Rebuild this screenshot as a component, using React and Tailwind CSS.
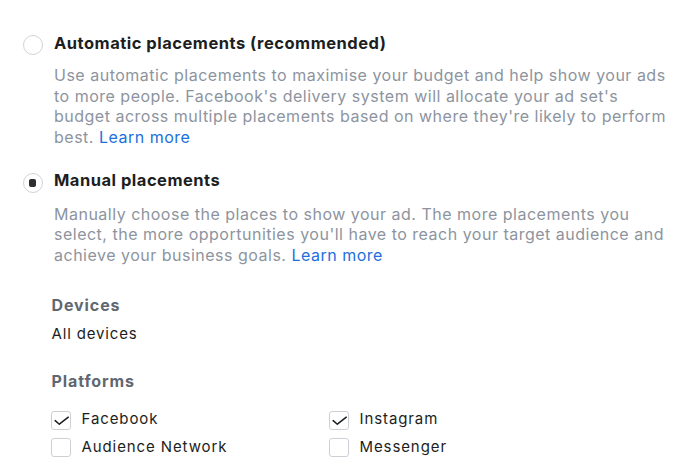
import React from "react";

function Radio({ checked }) {
  return (
    <div className="w-[20px] h-[20px] mt-[2.5px] rounded-full border border-[#d0d3d8] bg-white flex items-center justify-center shrink-0">
      {checked && <div className="w-[7px] h-[8px] rounded-[2px] bg-[#2d2f33]" />}
    </div>
  );
}

function Check({ checked, label }) {
  return (
    <div className="flex items-center h-[27.5px]">
      <div className="w-[20px] h-[19px] mt-[2px] rounded-[3px] border border-[#ccd0d5] bg-white shrink-0 relative">
        {checked && (
          <svg className="absolute left-0 top-0" width="20" height="19" viewBox="0 0 20 19" fill="none">
            <path d="M3.2 8.6 L7.3 12.2 L16.3 5.2" stroke="#1c1e21" strokeWidth="1.5" strokeLinecap="round" strokeLinejoin="round" />
          </svg>
        )}
      </div>
      <span className="ml-[11px] text-[15px] leading-[20px] tracking-[0.9px] text-[#1c1e21]">{label}</span>
    </div>
  );
}

export default function App() {
  return (
    <div className="w-[700px] h-[469px] bg-white overflow-hidden font-['Inter',sans-serif]">
      <div className="pl-[22.5px] pt-[32.5px]">
        <div className="flex items-start gap-[11.5px]">
          <Radio />
          <div className="text-[16.5px] leading-[20px] font-bold tracking-[0.5px] text-[#1c1e21]">Automatic placements (recommended)</div>
        </div>
        <p className="ml-[31.5px] mt-[10px] w-[618px] text-[16px] leading-[20.7px] tracking-[0.5px] text-[#8d949e]">
          Use automatic placements to maximise your budget and help show your ads to more people. Facebook's delivery system will allocate your ad set's budget across multiple placements based on where they're likely to perform best. <span className="text-[#216fdb]">Learn more</span>
        </p>
        <div className="flex items-start gap-[11.5px] mt-[22.5px]">
          <Radio checked />
          <div className="text-[16.5px] leading-[20px] font-bold tracking-[0.5px] text-[#1c1e21]">Manual placements</div>
        </div>
        <p className="ml-[31.5px] mt-[11px] w-[618px] text-[16px] leading-[20.5px] tracking-[0.5px] text-[#8d949e]">
          Manually choose the places to show your ad. The more placements you select, the more opportunities you'll have to reach your target audience and achieve your business goals. <span className="text-[#216fdb]">Learn more</span>
        </p>
        <div className="ml-[29px] mt-[29.5px]">
          <div className="text-[16px] leading-[20px] font-bold tracking-[0.9px] text-[#606770]">Devices</div>
          <div className="mt-[9.2px] text-[15px] leading-[20px] tracking-[0.85px] text-[#1c1e21]">All devices</div>
          <div className="mt-[26.5px] text-[16px] leading-[20px] font-bold tracking-[0.9px] text-[#606770]">Platforms</div>
          <div className="mt-[15px] ml-[-1px] grid grid-cols-[278px_1fr]">
            <Check checked label="Facebook" />
            <Check checked label="Instagram" />
            <Check label="Audience Network" />
            <Check label="Messenger" />
          </div>
        </div>
      </div>
    </div>
  );
}
